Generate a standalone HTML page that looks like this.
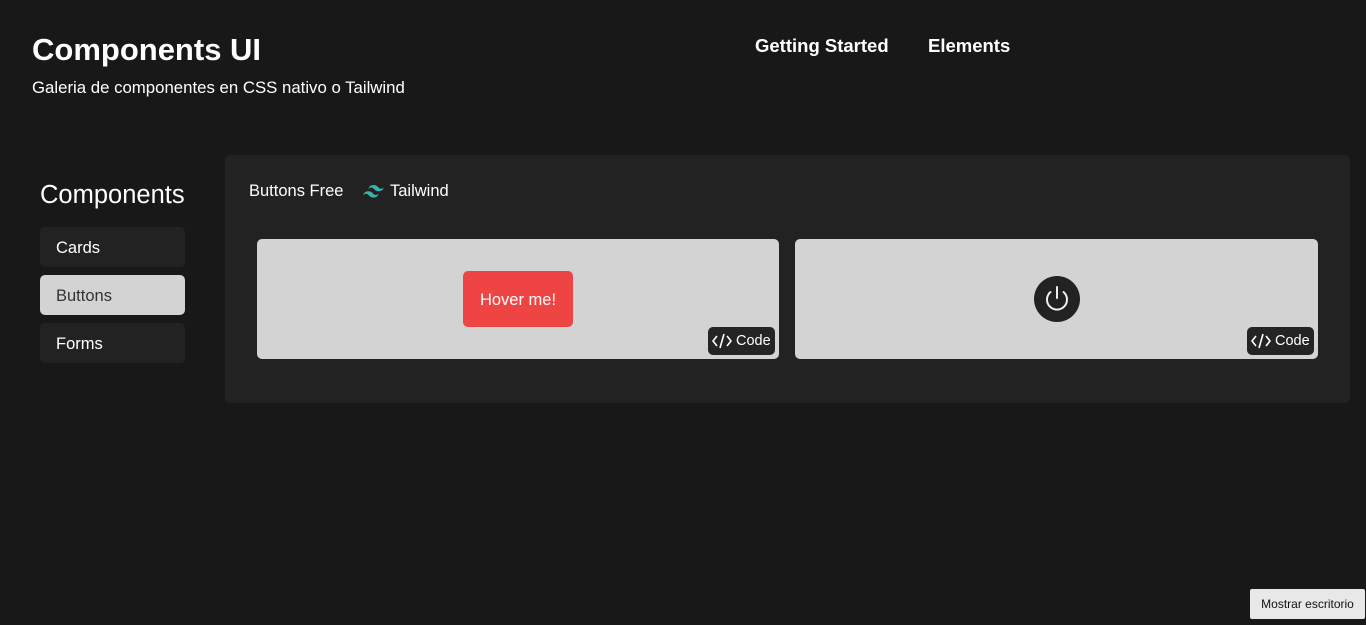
<!DOCTYPE html>
<html><head><style>
*{margin:0;padding:0;box-sizing:border-box}
body{width:1366px;height:625px;background:#181818;font-family:"Liberation Sans",sans-serif;color:#fff;position:relative;overflow:hidden}
.a{position:absolute}
h1{position:absolute;left:32px;top:32px;font-size:31px;font-weight:bold;letter-spacing:0}
.sub{left:32px;top:78px;font-size:16.8px}
.nav{top:35px;font-size:18.5px;font-weight:bold}
.side{left:40px;width:145px;height:40px;border-radius:5px;background:#222;font-size:16.5px;padding:11px 16px}
.panel{left:225px;top:155px;width:1125px;height:248px;background:#222;border-radius:5px}
.card{top:239px;height:120px;background:#d3d3d3;border-radius:5px}
.code{background:#242424;border-radius:5px;height:28px;font-size:14.5px;padding:6px 4px;display:flex;align-items:center;gap:4px}
</style></head><body>
<h1>Components UI</h1>
<div class="a sub">Galeria de componentes en CSS nativo o Tailwind</div>
<div class="a nav" style="left:755px">Getting Started</div>
<div class="a nav" style="left:928px">Elements</div>
<div class="a" style="left:40px;top:181px;font-size:25.5px">Components</div>
<div class="a side" style="top:227px;padding-top:12px">Cards</div>
<div class="a side" style="top:275px;background:#d3d3d3;color:#333;padding-top:12px">Buttons</div>
<div class="a side" style="top:323px;padding-top:12px">Forms</div>
<div class="a panel"></div>
<div class="a" style="left:249px;top:182px;font-size:16.5px">Buttons Free</div>
<svg class="a" style="left:363px;top:185px" width="21" height="13" viewBox="0 0 24 15"><path fill="#38b2ac" d="M12 0C8.8 0 6.8 1.6 6 4.8c1.2-1.6 2.6-2.2 4.2-1.8.9.2 1.6.9 2.3 1.6C13.7 5.8 15 7.2 18 7.2c3.2 0 5.2-1.6 6-4.8-1.2 1.6-2.6 2.2-4.2 1.8-.9-.2-1.6-.9-2.3-1.6C16.3 1.4 15 0 12 0zM6 7.2C2.8 7.2.8 8.8 0 12c1.2-1.6 2.6-2.2 4.2-1.8.9.2 1.6.9 2.3 1.6C7.7 13 9 14.4 12 14.4c3.2 0 5.2-1.6 6-4.8-1.2 1.6-2.6 2.2-4.2 1.8-.9-.2-1.6-.9-2.3-1.6C10.3 8.6 9 7.2 6 7.2z"/></svg>
<div class="a" style="left:390px;top:182px;font-size:16.5px">Tailwind</div>
<div class="a card" style="left:257px;width:522px"></div>
<div class="a card" style="left:795px;width:523px"></div>
<div class="a" style="left:463px;top:271px;width:110px;height:56px;background:#ef4444;border-radius:5px;font-size:16.5px;text-align:center;line-height:58px">Hover me!</div>
<svg class="a" style="left:1034px;top:276px" width="46" height="46" viewBox="0 0 46 46"><circle cx="23" cy="23" r="23" fill="#222"/><path d="M23 11v11M16.5 16a10 10 0 1 0 13 0" stroke="#eee" stroke-width="2" fill="none" stroke-linecap="round"/></svg>
<div class="a code" style="left:708px;top:327px"><svg width="20" height="16" viewBox="0 0 20 16"><path d="M5 3L1 8l4 5M15 3l4 5-4 5M12 1L8 15" stroke="#fff" stroke-width="1.6" fill="none"/></svg>Code</div>
<div class="a code" style="left:1247px;top:327px"><svg width="20" height="16" viewBox="0 0 20 16"><path d="M5 3L1 8l4 5M15 3l4 5-4 5M12 1L8 15" stroke="#fff" stroke-width="1.6" fill="none"/></svg>Code</div>
<div class="a" style="left:1250px;top:589px;width:115px;height:30px;background:#e8e8e8;color:#111;font-size:12px;line-height:30px;text-align:center;border-radius:2px">Mostrar escritorio</div>
</body></html>
